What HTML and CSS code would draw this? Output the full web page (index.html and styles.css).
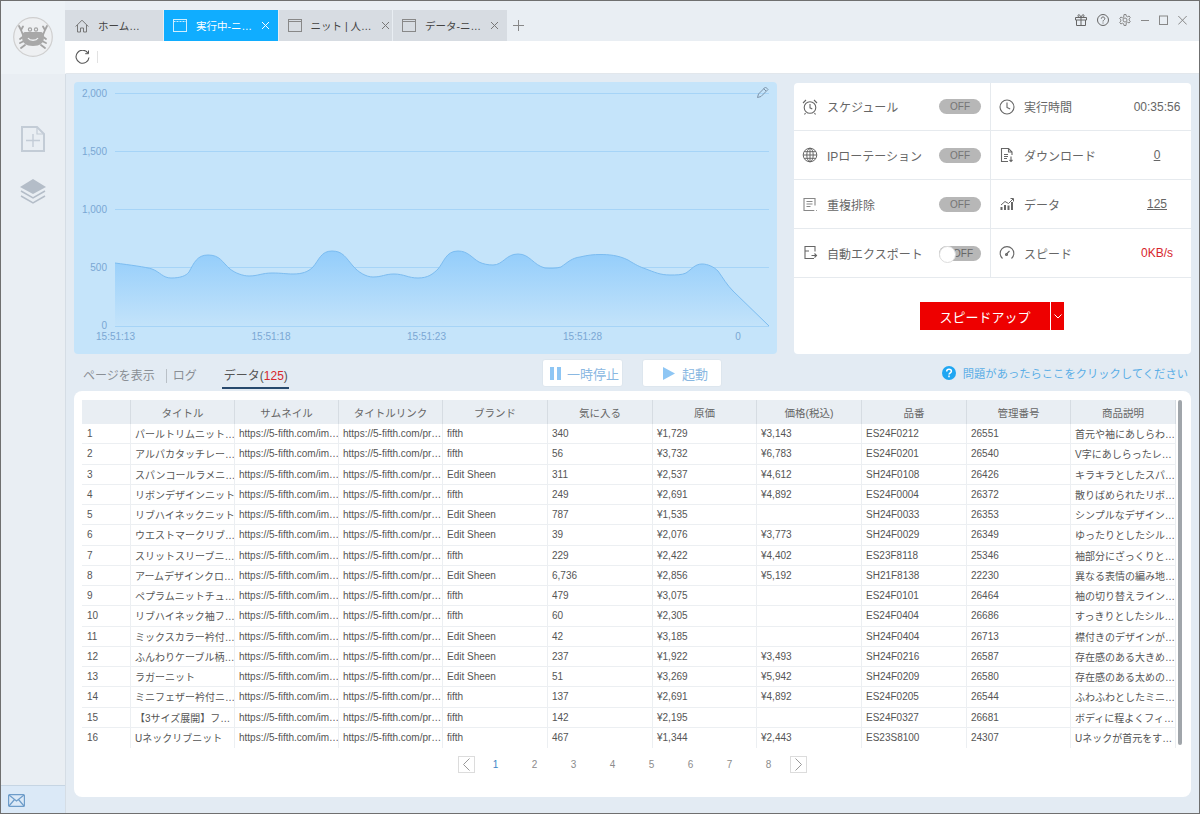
FILE: index.html
```html
<!DOCTYPE html>
<html lang="ja">
<head>
<meta charset="utf-8">
<title>データ</title>
<link rel="stylesheet" href="styles.css">
</head>
<body>
<div class="window">
  <aside class="sidebar">
    <div class="logo-zone">
      <svg class="logo" viewBox="0 0 40 40" width="40" height="40">
        <circle cx="20" cy="20" r="19.3" fill="#eef0f2" stroke="#cfcfcf" stroke-width="1.2"/>
        <g fill="none" stroke="#a3a3a3" stroke-width="1.8" stroke-linecap="round">
          <path d="M10 18 8 13M8 13 6 9M8 13 10 9.5M30 18 32 13M32 13 34 9M32 13 30 9.5"/>
          <path d="M11 19 7 22M11 24 7 26M12 28 8 31M29 19 33 22M29 24 33 26M28 28 32 31"/>
          <circle cx="17" cy="12.5" r="1.6" stroke-width="1.2"/>
          <circle cx="23" cy="12.5" r="1.6" stroke-width="1.2"/>
        </g>
        <path d="M13 15h14c3 0 4 2 4 5 0 6-4 9-11 9s-11-3-11-9c0-3 1-5 4-5z" fill="#a8a8a8"/>
        <path d="M15 21c2 3 8 3 10 0" fill="none" stroke="#eef0f2" stroke-width="1.3"/>
      </svg>
    </div>
    <nav class="side-nav">
      <svg viewBox="0 0 24 26" width="24" height="26" fill="none" stroke="#c3ccd6" stroke-width="2">
        <path d="M1 1h15l7 7v17H1z"/><path d="M16 1v7h7" stroke-width="1.2"/>
        <path d="M12 8v13M5 14.500h14" stroke-width="1.4"/>
      </svg>
      <svg viewBox="0 0 26 25" width="26" height="25" fill="none" stroke="#b4bdc8">
        <path d="M13 0 26 8 13 15 0 8z" fill="#b4bdc8" stroke="none"/>
        <path d="M1 12l12 7 12-7M1 17l12 7 12-7" stroke-width="1.5"/>
      </svg>
    </nav>
    <div class="mail">
      <svg viewBox="0 0 17 13" width="17" height="13" fill="none" stroke="#6d9cc9" stroke-width="1.2">
        <rect x=".6" y=".6" width="15.800" height="11.800" rx="1"/><path d="M1 1l7.500 6L16 1M1 12l5.500-6.500M16 12l-5.500-6.500"/>
      </svg>
    </div>
  </aside>

  <main class="main">
    <header class="titlebar">
      <div class="tabs">
        <div class="tab tab-home">
          <svg viewBox="0 0 14 14" width="14" height="14" fill="none" stroke="#777" stroke-width="1"><path d="M.7 7.500 7 1.200l6.300 6.300M2.500 6v7h3V9h3v4h3V6"/></svg>
          <span>ホーム…</span>
        </div>
        <div class="tab tab-active">
          <svg viewBox="0 0 14 13" width="14" height="13" fill="none" stroke="#cfeeff" stroke-width="1"><rect x=".5" y=".5" width="13" height="12"/><path d="M.5 2.500h13" stroke-dasharray="2 1"/></svg>
          <span>実行中-ニ…</span>
          <svg class="tab-close" viewBox="0 0 9 9" width="9" height="9" stroke="#fff" stroke-width="1"><path d="M1 1l7 7M8 1 1 8"/></svg>
        </div>
        <div class="tab">
          <svg viewBox="0 0 14 13" width="14" height="13" fill="none" stroke="#888" stroke-width="1"><rect x=".5" y=".5" width="13" height="12"/><path d="M.5 2.500h13"/></svg>
          <span>ニット | 人…</span>
          <svg class="tab-close" viewBox="0 0 9 9" width="9" height="9" stroke="#777" stroke-width="1"><path d="M1 1l7 7M8 1 1 8"/></svg>
        </div>
        <div class="tab">
          <svg viewBox="0 0 14 13" width="14" height="13" fill="none" stroke="#888" stroke-width="1"><rect x=".5" y=".5" width="13" height="12"/><path d="M.5 2.500h13"/></svg>
          <span>データ-ニ…</span>
          <svg class="tab-close" viewBox="0 0 9 9" width="9" height="9" stroke="#777" stroke-width="1"><path d="M1 1l7 7M8 1 1 8"/></svg>
        </div>
        <svg class="tab-add" viewBox="0 0 11 11" width="11" height="11" stroke="#888" stroke-width="1"><path d="M5.500 0v11M0 5.500h11"/></svg>
      </div>
      <div class="win-controls">
        <svg viewBox="0 0 12 12" width="12" height="12" fill="none" stroke="#666" stroke-width="1"><path d="M.5 3.500h11v2.500H.5zM1.500 6v5.500h9V6M6 3.500v8M6 3.500C4 3.500 2.500 2.500 3 1.200 3.700.2 5.500 1 6 3.500c.5-2.500 2.300-3.300 3-2.300.5 1.300-1 2.300-3 2.300z"/></svg>
        <svg viewBox="0 0 12 12" width="12" height="12" fill="none" stroke="#666" stroke-width="1"><circle cx="6" cy="6" r="5.500"/><path d="M4.300 4.700C4.300 3.600 5 3 6 3s1.800.7 1.800 1.600C7.800 6 6 6 6 7.500"/><path d="M6 8.500v1"/></svg>
        <svg viewBox="0 0 12 12" width="12" height="12" fill="none" stroke="#888" stroke-width="1"><circle cx="6" cy="6" r="2"/><path d="M5 .5h2l.3 1.700 1.300.6L10.100 2l1.200 1.700-1.200 1.100v1.400l1.200 1.100L10.100 9l-1.500-.8-1.300.6L7 11.500H5l-.3-1.700-1.300-.6L1.900 10 .7 8.300l1.200-1.100V5.800L.7 4.700 1.900 3l1.500.8 1.300-.6z"/></svg>
        <svg viewBox="0 0 8 12" width="8" height="12" stroke="#888" stroke-width="1"><path d="M0 6.500h8"/></svg>
        <svg viewBox="0 0 9 12" width="9" height="12" fill="none" stroke="#888" stroke-width="1"><rect x=".5" y="2" width="8" height="8.500"/></svg>
        <svg viewBox="0 0 9 12" width="9" height="12" stroke="#888" stroke-width="1"><path d="M.3 2l8.400 8.500M8.700 2 .3 10.500"/></svg>
      </div>
    </header>
    <div class="toolbar">
      <svg viewBox="0 0 15 15" width="15" height="15" fill="none" stroke="#555" stroke-width="1.100"><path d="M13 3.200A6.500 6.500 0 1 0 14 7.500"/><path d="M13.500 .5v3.200h-3.300" stroke-width="1"/></svg>
      <span class="toolbar-sep"></span>
    </div>

    <section class="content">
      <div class="top-row">
        <div class="chart">
          <svg class="chart-svg" viewBox="74 82 703 272" width="703" height="272">
            <defs>
              <linearGradient id="area" x1="0" y1="0" x2="0" y2="1">
                <stop offset="0" stop-color="#93cdfb"/>
                <stop offset="1" stop-color="#c3e3fa"/>
              </linearGradient>
            </defs>
            <g stroke="#a6d4f7" stroke-width="1">
              <path d="M115 93.500H769M115 151.500H769M115 209.500H769M115 267.500H769M115 326.500H769"/>
            </g>
            <path d="M115 263C130 265 146 267 152 269C160 272 163 278 171 278C180 278 186 276 189 272C194 263 197 255 208 255C220 255 222 262 230 269C235 273 243 276 249 276C258 276 262 273 272 273C282 273 286 274 293 274C302 274 308 272 313 267C319 260 321 251 332 251C343 251 346 258 353 266C358 272 366 277 373 277C382 277 385 274 394 274C404 274 408 278 418 278C428 278 433 274 438 269C444 262 446 251 458 251C468 251 472 258 479 262C483 264 488 265 493 265C503 265 506 254 518 254C530 254 533 265 545 268C550 268.500 556 268.500 561 267C568 262 572 258 580 257C588 255 594 254.500 600 254.500C608 254.500 618 255 628 260C636 265 640 267 646 269C654 272 660 275 670 275C676 275 682 275 686 273C692 269 695 264 702 264C708 264 714 267 718 271C723 278 727 285 733 291L769 326V326H115Z" fill="url(#area)"/>
            <path d="M115 263C130 265 146 267 152 269C160 272 163 278 171 278C180 278 186 276 189 272C194 263 197 255 208 255C220 255 222 262 230 269C235 273 243 276 249 276C258 276 262 273 272 273C282 273 286 274 293 274C302 274 308 272 313 267C319 260 321 251 332 251C343 251 346 258 353 266C358 272 366 277 373 277C382 277 385 274 394 274C404 274 408 278 418 278C428 278 433 274 438 269C444 262 446 251 458 251C468 251 472 258 479 262C483 264 488 265 493 265C503 265 506 254 518 254C530 254 533 265 545 268C550 268.500 556 268.500 561 267C568 262 572 258 580 257C588 255 594 254.500 600 254.500C608 254.500 618 255 628 260C636 265 640 267 646 269C654 272 660 275 670 275C676 275 682 275 686 273C692 269 695 264 702 264C708 264 714 267 718 271C723 278 727 285 733 291L769 326" fill="none" stroke="#7cbcf0" stroke-width="1"/>
            <g class="axis" text-anchor="end">
              <text x="107" y="96.500">2,000</text>
              <text x="107" y="155">1,500</text>
              <text x="107" y="213">1,000</text>
              <text x="107" y="271">500</text>
              <text x="107" y="328.500">0</text>
            </g>
            <g class="axis" text-anchor="middle">
              <text x="115.500" y="340">15:51:13</text>
              <text x="271" y="340">15:51:18</text>
              <text x="426.500" y="340">15:51:23</text>
              <text x="582.500" y="340">15:51:28</text>
              <text x="738" y="340">0</text>
            </g>
            <path d="M757.500 97.500l1-3.500 7-7 2.500 2.500-7 7zM763.500 88.500l2.500 2.500" fill="none" stroke="#7d93a8" stroke-width="1"/>
          </svg>
        </div>

        <div class="panel">
          <div class="stats">
            <div class="stat">
              <svg viewBox="0 0 16 16" width="16" height="16" fill="none" stroke="#666" stroke-width="1.100"><circle cx="8" cy="8.500" r="5.800"/><path d="M8 5v3.800l2.300 1.200M1 4l3-3M15 4l-3-3M3.500 14l-1 1.500M12.500 14l1 1.500"/></svg>
              <span class="stat-label">スケジュール</span>
              <span class="toggle">OFF</span>
            </div>
            <div class="stat">
              <svg viewBox="0 0 16 16" width="16" height="16" fill="none" stroke="#666" stroke-width="1.100"><circle cx="8" cy="8" r="7"/><path d="M8 3.500V8.500l3.200 1.500"/></svg>
              <span class="stat-label">実行時間</span>
              <span class="stat-value">00:35:56</span>
            </div>
            <div class="stat">
              <svg viewBox="0 0 16 16" width="16" height="16" fill="none" stroke="#666" stroke-width="1"><circle cx="8" cy="8" r="6.800"/><ellipse cx="8" cy="8" rx="3.200" ry="6.800"/><path d="M8 1.200v13.600M1.200 8h13.600M2.200 4.700h11.600M2.200 11.300h11.600"/></svg>
              <span class="stat-label">IPローテーション</span>
              <span class="toggle">OFF</span>
            </div>
            <div class="stat">
              <svg viewBox="0 0 16 16" width="16" height="16" fill="none" stroke="#666" stroke-width="1.100"><path d="M9 14.500H2.500v-13h7l3.500 3.500v3"/><path d="M9.500 1.500V5H13M5 7.500h4M5 9.500h4M5 11.500h3M12 9.500v5M10.500 13l1.500 1.500 1.500-1.500"/></svg>
              <span class="stat-label">ダウンロード</span>
              <span class="stat-value stat-link">0</span>
            </div>
            <div class="stat">
              <svg viewBox="0 0 16 16" width="16" height="16" fill="none" stroke="#888" stroke-width="1.100"><path d="M12 14.500H2v-12h11v7M4.500 5.500h6M4.500 8h6M4.500 10.500h4M11.500 14.500h.8M14 14.500h.8"/></svg>
              <span class="stat-label">重複排除</span>
              <span class="toggle">OFF</span>
            </div>
            <div class="stat">
              <svg viewBox="0 0 16 16" width="16" height="16" fill="none" stroke="#666" stroke-width="1.500"><path d="M2.500 14v-3M6 14V9M9.500 14V9.500M13 14V6" stroke-width="2"/><path d="M2 9 6 5.500l3.500 2L14 3" stroke-width="1"/><path d="M11.500 2.500H14.500V5.500" stroke-width="1"/></svg>
              <span class="stat-label">データ</span>
              <span class="stat-value stat-link">125</span>
            </div>
            <div class="stat">
              <svg viewBox="0 0 16 16" width="16" height="16" fill="none" stroke="#666" stroke-width="1.100"><path d="M12 13.500H3V1.500h10v5M3 6h4"/><path d="M9.500 10.500h5M12.500 8.500l2 2-2 2"/></svg>
              <span class="stat-label">自動エクスポート</span>
              <span class="toggle toggle-knob">OFF</span>
            </div>
            <div class="stat">
              <svg viewBox="0 0 16 16" width="16" height="16" fill="none" stroke="#666" stroke-width="1.100"><path d="M3.500 13.500a6.800 6.800 0 1 1 9 0"/><path d="M7 9.500l3.500-3.500"/><circle cx="7.500" cy="9.500" r="1"/></svg>
              <span class="stat-label">スピード</span>
              <span class="stat-value stat-red">0KB/s</span>
            </div>
          </div>
          <div class="boost-area">
            <div class="boost">
              <span class="boost-main">スピードアップ</span>
              <span class="boost-arrow"><svg viewBox="0 0 8 5" width="8" height="5" fill="none" stroke="#fff" stroke-width="1"><path d="M.5.500 4 4 7.500.500"/></svg></span>
            </div>
          </div>
        </div>
      </div>

      <div class="mid-row">
        <div class="view-tabs">
          <span class="view-tab">ページを表示</span>
          <span class="view-sep"></span>
          <span class="view-tab">ログ</span>
          <span class="view-tab view-active">データ(<em>125</em>)</span>
        </div>
        <div class="run-btns">
          <button class="run-btn run-pause" type="button">
            <svg viewBox="0 0 11 13" width="11" height="13" fill="#8ec6f4"><rect width="4" height="13"/><rect x="7" width="4" height="13"/></svg>
            一時停止
          </button>
          <button class="run-btn run-start" type="button">
            <svg viewBox="0 0 12 13" width="12" height="13" fill="#8ec6f4"><path d="M0 0 12 6.500 0 13z"/></svg>
            起動
          </button>
        </div>
        <a class="help-link">
          <svg viewBox="0 0 14 14" width="14" height="14"><circle cx="7" cy="7" r="7" fill="#1fa6f2"/><path d="M4.700 5.400C4.700 4 5.700 3.200 7 3.200s2.400.8 2.400 2C9.400 6.800 7 6.800 7 8.600" fill="none" stroke="#fff" stroke-width="1.500"/><path d="M7 9.600v1.600" stroke="#fff" stroke-width="1.500"/></svg>
          問題があったらここをクリックしてください
        </a>
      </div>

      <div class="card">
        <div class="table-area">
          <table class="data">
            <colgroup>
              <col class="c49"><col class="c104"><col class="c104"><col class="c104"><col class="c105"><col class="c105"><col class="c104"><col class="c105"><col class="c105"><col class="c104"><col class="c105">
            </colgroup>
            <thead>
              <tr><th></th><th>タイトル</th><th>サムネイル</th><th>タイトルリンク</th><th>ブランド</th><th>気に入る</th><th>原価</th><th>価格(税込)</th><th>品番</th><th>管理番号</th><th>商品説明</th></tr>
            </thead>
            <tbody>
              <tr><td>1</td><td>パールトリムニット…</td><td>https://5-fifth.com/im…</td><td>https://5-fifth.com/pr…</td><td>fifth</td><td>340</td><td>¥1,729</td><td>¥3,143</td><td>ES24F0212</td><td>26551</td><td>首元や袖にあしらわ…</td></tr>
              <tr><td>2</td><td>アルパカタッチレー…</td><td>https://5-fifth.com/im…</td><td>https://5-fifth.com/pr…</td><td>fifth</td><td>56</td><td>¥3,732</td><td>¥6,783</td><td>ES24F0201</td><td>26540</td><td>V字にあしらったレ…</td></tr>
              <tr><td>3</td><td>スパンコールラメニ…</td><td>https://5-fifth.com/im…</td><td>https://5-fifth.com/pr…</td><td>Edit Sheen</td><td>311</td><td>¥2,537</td><td>¥4,612</td><td>SH24F0108</td><td>26426</td><td>キラキラとしたスパ…</td></tr>
              <tr><td>4</td><td>リボンデザインニット</td><td>https://5-fifth.com/im…</td><td>https://5-fifth.com/pr…</td><td>fifth</td><td>249</td><td>¥2,691</td><td>¥4,892</td><td>ES24F0004</td><td>26372</td><td>散りばめられたリボ…</td></tr>
              <tr><td>5</td><td>リブハイネックニット</td><td>https://5-fifth.com/im…</td><td>https://5-fifth.com/pr…</td><td>Edit Sheen</td><td>787</td><td>¥1,535</td><td></td><td>SH24F0033</td><td>26353</td><td>シンプルなデザイン…</td></tr>
              <tr><td>6</td><td>ウエストマークリブ…</td><td>https://5-fifth.com/im…</td><td>https://5-fifth.com/pr…</td><td>Edit Sheen</td><td>39</td><td>¥2,076</td><td>¥3,773</td><td>SH24F0029</td><td>26349</td><td>ゆったりとしたシル…</td></tr>
              <tr><td>7</td><td>スリットスリーブニ…</td><td>https://5-fifth.com/im…</td><td>https://5-fifth.com/pr…</td><td>fifth</td><td>229</td><td>¥2,422</td><td>¥4,402</td><td>ES23F8118</td><td>25346</td><td>袖部分にざっくりと…</td></tr>
              <tr><td>8</td><td>アームデザインクロ…</td><td>https://5-fifth.com/im…</td><td>https://5-fifth.com/pr…</td><td>Edit Sheen</td><td>6,736</td><td>¥2,856</td><td>¥5,192</td><td>SH21F8138</td><td>22230</td><td>異なる表情の編み地…</td></tr>
              <tr><td>9</td><td>ペプラムニットチュ…</td><td>https://5-fifth.com/im…</td><td>https://5-fifth.com/pr…</td><td>fifth</td><td>479</td><td>¥3,075</td><td></td><td>ES24F0101</td><td>26464</td><td>袖の切り替えライン…</td></tr>
              <tr><td>10</td><td>リブハイネック袖フ…</td><td>https://5-fifth.com/im…</td><td>https://5-fifth.com/pr…</td><td>fifth</td><td>60</td><td>¥2,305</td><td></td><td>ES24F0404</td><td>26686</td><td>すっきりとしたシル…</td></tr>
              <tr><td>11</td><td>ミックスカラー衿付…</td><td>https://5-fifth.com/im…</td><td>https://5-fifth.com/pr…</td><td>Edit Sheen</td><td>42</td><td>¥3,185</td><td></td><td>SH24F0404</td><td>26713</td><td>襟付きのデザインが…</td></tr>
              <tr><td>12</td><td>ふんわりケーブル柄…</td><td>https://5-fifth.com/im…</td><td>https://5-fifth.com/pr…</td><td>Edit Sheen</td><td>237</td><td>¥1,922</td><td>¥3,493</td><td>SH24F0216</td><td>26587</td><td>存在感のある大きめ…</td></tr>
              <tr><td>13</td><td>ラガーニット</td><td>https://5-fifth.com/im…</td><td>https://5-fifth.com/pr…</td><td>Edit Sheen</td><td>51</td><td>¥3,269</td><td>¥5,942</td><td>SH24F0209</td><td>26580</td><td>存在感のある太めの…</td></tr>
              <tr><td>14</td><td>ミニフェザー衿付ニ…</td><td>https://5-fifth.com/im…</td><td>https://5-fifth.com/pr…</td><td>fifth</td><td>137</td><td>¥2,691</td><td>¥4,892</td><td>ES24F0205</td><td>26544</td><td>ふわふわとしたミニ…</td></tr>
              <tr><td>15</td><td>【3サイズ展開】フ…</td><td>https://5-fifth.com/im…</td><td>https://5-fifth.com/pr…</td><td>fifth</td><td>142</td><td>¥2,195</td><td></td><td>ES24F0327</td><td>26681</td><td>ボディに程よくフィ…</td></tr>
              <tr><td>16</td><td>Uネックリブニット</td><td>https://5-fifth.com/im…</td><td>https://5-fifth.com/pr…</td><td>fifth</td><td>467</td><td>¥1,344</td><td>¥2,443</td><td>ES23S8100</td><td>24307</td><td>Uネックが首元をす…</td></tr>
            </tbody>
          </table>
          <div class="scrollbar"></div>
        </div>
        <div class="pager">
          <span class="page-box"><svg viewBox="0 0 9 13" width="9" height="13" fill="none" stroke="#999" stroke-width="1"><path d="M7.500.500 1.500 6.500l6 6"/></svg></span>
          <div class="pages">
            <span class="page page-on">1</span><span class="page">2</span><span class="page">3</span><span class="page">4</span><span class="page">5</span><span class="page">6</span><span class="page">7</span><span class="page">8</span>
          </div>
          <span class="page-box"><svg viewBox="0 0 9 13" width="9" height="13" fill="none" stroke="#999" stroke-width="1"><path d="M1.500.500l6 6-6 6"/></svg></span>
        </div>
      </div>
    </section>
  </main>
</div>
</body>
</html>
```
FILE: styles.css
```css
* { box-sizing: border-box; }
html, body { margin: 0; padding: 0; }
body {
  width: 1200px;
  height: 814px;
  overflow: hidden;
  font-family: "Liberation Sans", "Noto Sans CJK JP", sans-serif;
  font-size: 12px;
  color: #666;
}
svg { display: block; flex: none; }

.window {
  display: flex;
  width: 1200px;
  height: 814px;
  border: 1px solid #6f6f6f;
}

/* sidebar */
.sidebar {
  display: flex;
  flex-direction: column;
  width: 64px;
  flex: none;
  background: #e9eef3;
}
.logo-zone {
  height: 73px;
  padding: 16px 0 0 12px;
  background: #edf2f6;
}
.side-nav {
  display: flex;
  flex-direction: column;
  align-items: center;
  gap: 27px;
  margin-top: 52px;
}
.mail {
  margin-top: auto;
  height: 28px;
  padding: 8px 0 0 7px;
  background: #dbe9f7;
  border-top: 1px solid #c6d5e3;
}

/* main */
.main {
  display: flex;
  flex-direction: column;
  flex: 1;
  min-width: 0;
}
.titlebar {
  display: flex;
  justify-content: space-between;
  height: 40px;
  padding-top: 9px;
  background: #e9eef3;
}
.tabs {
  display: flex;
  align-items: stretch;
  gap: 1px;
}
.tab {
  display: flex;
  align-items: center;
  gap: 9px;
  width: 113.5px;
  padding: 0 8px 0 9px;
  background: #d7dce2;
  color: #444;
  font-size: 10.5px;
  white-space: nowrap;
}
.tab-home { width: 98px; padding-left: 10px; }
.tab-active { background: #10adff; color: #fff; }
.tab-close { margin-left: auto; }
.tab-add { align-self: center; margin-left: 5px; }
.win-controls {
  display: flex;
  gap: 10px;
  height: 12px;
  margin-top: 4px;
  padding-right: 12px;
}
.toolbar {
  display: flex;
  align-items: center;
  gap: 7px;
  height: 33px;
  padding-left: 9px;
  background: #fff;
  border-left: 1px solid #fff;
  border-bottom: 1px solid #e2e7ec;
}
.toolbar-sep { width: 1px; height: 12px; background: #e2e2e2; }

/* content */
.content {
  display: flex;
  flex-direction: column;
  flex: 1;
  min-height: 0;
  padding: 8px 8px 16px 8px;
  background: #e3ebf3;
  border-left: 1px solid #d5dde5;
}
.top-row { display: flex; gap: 17px; height: 272px; flex: none; }

.chart {
  width: 703px;
  flex: none;
  background: #c5e4fa;
  border-radius: 4px;
  overflow: hidden;
}
.axis text {
  font-size: 10px;
  fill: #7aa7d4;
}

.panel {
  display: flex;
  flex-direction: column;
  flex: 1;
  margin-top: 1px;
  background: #fff;
  border-radius: 4px;
}
.stats {
  display: grid;
  grid-template-columns: 197px 1fr;
  grid-template-rows: 48px 49px 49px 49px;
}
.stat {
  display: flex;
  align-items: center;
  border-bottom: 1px solid #e6eaee;
  padding-left: 8px;
  color: #666;
}
.stat:nth-child(odd) { border-right: 1px solid #e6eaee; }
.stat:nth-child(even) { padding-left: 8px; }
.stat-label { margin-left: 9px; white-space: nowrap; flex: 1; }
.toggle {
  position: relative;
  width: 42px;
  height: 15px;
  margin-right: 9px;
  padding-left: 11px;
  border-radius: 8px;
  background: #b7b7b7;
  color: #757575;
  font-size: 10px;
  line-height: 15px;
}
.toggle-knob::before {
  content: "";
  position: absolute;
  left: 0;
  top: 0;
  width: 15px;
  height: 15px;
  border-radius: 50%;
  background: #fff;
  border: 1px solid #ddd;
}
.toggle-knob { padding-left: 14px; color: #666; }
.stat-value { width: 68px; text-align: center; color: #666; flex: none; }
.stat-link { text-decoration: underline; }
.stat-red { color: #d7262c; }
.boost-area {
  display: flex;
  flex: 1;
  align-items: flex-start;
  justify-content: center;
  padding-top: 24px;
  padding-right: 1px;
}
.boost { display: flex; gap: 1px; height: 28px; color: #fff; font-size: 13px; }
.boost-main {
  display: flex;
  align-items: center;
  justify-content: center;
  width: 130px;
  background: #ee0000;
}
.boost-arrow {
  display: flex;
  align-items: center;
  justify-content: center;
  width: 13px;
  background: #ee0000;
}

.mid-row {
  display: flex;
  height: 37px;
  flex: none;
  padding: 0 3px 0 9px;
}
.view-tabs {
  display: flex;
  align-items: flex-start;
  width: 459px;
  padding-top: 14px;
  color: #8a8f95;
  flex: none;
}
.view-tab { line-height: 17px; white-space: nowrap; }
.view-sep { width: 1px; height: 14px; margin: 1px 6px 0 11px; background: #b9c0c7; }
.view-active {
  height: 21px;
  margin-left: 25px;
  padding: 0 1px 0 2px;
  color: #555;
  border-bottom: 2px solid #27496d;
}
.view-active em { font-style: normal; color: #d7262c; }
.run-btns { display: flex; gap: 19px; padding-top: 5px; flex: none; }
.run-btn {
  display: flex;
  align-items: center;
  height: 28px;
  margin: 0;
  padding: 0 0 0 7px;
  gap: 6px;
  border: 1px solid #dde6ee;
  border-radius: 3px;
  background: #fff;
  color: #8ab8e2;
  font-family: inherit;
  font-size: 13px;
  white-space: nowrap;
}
.run-pause { width: 81px; }
.run-start { width: 80px; padding-left: 20px; gap: 7px; }
.help-link {
  display: flex;
  align-items: center;
  gap: 7px;
  height: 17px;
  margin: 10px 0 0 auto;
  color: #5aaee6;
  font-size: 11.3px;
  white-space: nowrap;
}

/* table card */
.card {
  display: flex;
  flex-direction: column;
  flex: 1;
  min-height: 0;
  padding: 9px 8px 0;
  background: #fff;
  border-radius: 8px;
}
.table-area { display: flex; gap: 2px; align-items: flex-start; }
.data {
  width: 1094px;
  table-layout: fixed;
  border-collapse: separate;
  border-spacing: 0;
  font-size: 10px;
  color: #555;
}
.c49 { width: 49px; }
.c104 { width: 104px; }
.c105 { width: 105px; }
.data th {
  height: 24px;
  padding: 0;
  background: #e9eef3;
  border-right: 1px solid #d6dce2;
  font-size: 10.5px;
  font-weight: 400;
  color: #666;
  text-align: center;
}
.data tbody tr { height: 20.25px; }
.data td {
  padding: 0 0 0 4px;
  border-right: 1px solid #eceff2;
  border-bottom: 1px solid #eceff2;
  white-space: nowrap;
  overflow: hidden;
}
.data td:first-child { padding-left: 5px; }
.data tr:last-child td { border-bottom: 0; }
.scrollbar {
  width: 4px;
  height: 345px;
  background: #a0a5aa;
  border-radius: 2px;
}
.pager {
  display: flex;
  justify-content: center;
  align-items: center;
  margin-top: 8px;
  height: 17px;
}
.page-box {
  display: flex;
  align-items: center;
  justify-content: center;
  width: 17px;
  height: 17px;
  border: 1px solid #dcdcdc;
}
.pages { display: flex; margin: 0 2px 0 1px; }
.page {
  width: 39px;
  text-align: center;
  font-size: 10px;
  color: #8c8c8c;
}
.page-on { color: #3d86c6; }
```
